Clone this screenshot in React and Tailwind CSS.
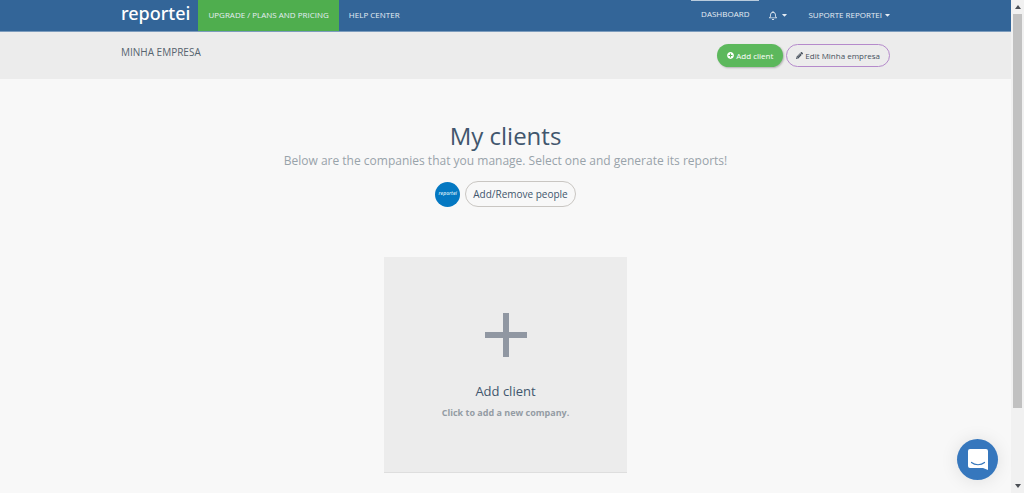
import { FaCaretDown, FaPlusCircle, FaPencilAlt, FaRegBell } from "react-icons/fa";

function TopBar() {
  return (
    <header className="bg-[#336598] border-b border-[#7c9cbd] text-[#e6edf4] text-[8px]">
      <nav className="mx-auto flex h-[31px] max-w-[769px] items-stretch pb-px">
        <a href="#home" className="flex items-center pb-1 pr-2 font-['Noto_Sans','Open_Sans',sans-serif] text-lg font-medium leading-none text-white">
          reportei
        </a>
        <a href="#plans" className="-mb-px flex items-center bg-[#4fae4e] px-[10px] pb-[2px]">
          UPGRADE / PLANS AND PRICING
        </a>
        <a href="#help" className="flex items-center px-[10px] pb-px">
          HELP CENTER
        </a>
        <div className="ml-auto flex items-stretch">
          <a href="#dashboard" className="flex items-center border-t border-[#b9cbdc] px-[10px] pb-[3px]">
            DASHBOARD
          </a>
          <button type="button" aria-label="Notifications" className="flex items-center gap-[5px] px-[10px]">
            <FaRegBell className="h-[9px] w-2" />
            <FaCaretDown className="h-2 w-[5px]" />
          </button>
          <button type="button" className="flex items-center gap-[3px] pl-[11px] pb-px">
            SUPORTE REPORTEI
            <FaCaretDown className="h-2 w-[5px]" />
          </button>
        </div>
      </nav>
    </header>
  );
}

function CompanyBar() {
  return (
    <section className="bg-[#ececec]">
      <div className="mx-auto flex h-[47px] max-w-[769px] items-center justify-between">
        <h2 className="pb-[6px] text-[10px] text-[#56646f]">MINHA EMPRESA</h2>
        <div className="flex gap-[3px] text-[8px]">
          <button type="button" className="flex h-[23px] items-center gap-[2px] rounded-full bg-[#5cb85c] px-[10px] text-white shadow-[1px_1px_2px_rgba(0,0,0,0.25)]">
            <FaPlusCircle className="size-[7px]" />
            Add client
          </button>
          <button type="button" className="flex h-[23px] items-center gap-[2px] rounded-full border border-[#b58acb] px-[9px] text-[#46505c]">
            <FaPencilAlt className="size-[7px]" />
            Edit Minha empresa
          </button>
        </div>
      </div>
    </section>
  );
}

function Clients() {
  return (
    <main className="flex flex-col items-center pt-10 text-center text-[#41566d]">
      <h1 className="text-2xl leading-[34px]">My clients</h1>
      <p className="text-xs leading-4 text-[#98a3aa]">
        Below are the companies that you manage. Select one and generate its reports!
      </p>
      <div className="mt-3 flex items-center gap-[5px]">
        <span className="flex size-[25px] items-center justify-center rounded-full bg-[#0478c2] text-[5px] italic font-semibold text-[#d5e9f6]">
          reportei
        </span>
        <button type="button" className="h-[26px] rounded-full border border-[#c9c6c2] px-[7px] text-[10px]">
          Add/Remove people
        </button>
      </div>
      <button type="button" className="mt-[50px] flex h-[216px] w-[243px] flex-col items-center border-b border-[#dedede] bg-[#ececec] pt-14">
        <svg viewBox="0 0 42 44" className="h-11 w-[42px]" fill="#9097a2" aria-hidden="true">
          <path d="M18 0h6v19h18v6H24v19h-6V25H0v-6h18z" />
        </svg>
        <span className="mt-6 text-[13px] leading-5">Add client</span>
        <span className="mt-1 text-[9px] font-bold leading-4 text-[#949ca4]">Click to add a new company.</span>
      </button>
    </main>
  );
}

function ScrollTrack() {
  return (
    <aside aria-hidden="true" className="sticky top-0 flex h-screen w-[13px] flex-col items-center bg-[#f1f1f1] py-[5px]">
      <svg viewBox="0 0 6 4" className="h-1 w-1.5" fill="#4b4f55"><path d="M0 4L3 0l3 4z" /></svg>
      <div className="mt-[5px] w-[9px] grow-[393] bg-[#c1c1c1]" />
      <div className="grow-[76]" />
      <svg viewBox="0 0 6 4" className="h-1 w-1.5" fill="#4b4f55"><path d="M0 0h6L3 4z" /></svg>
    </aside>
  );
}

export default function App() {
  return (
    <div className="flex min-h-screen bg-[#f8f8f8] font-['Open_Sans','Noto_Sans',sans-serif]">
      <div className="min-w-0 grow">
        <TopBar />
        <CompanyBar />
        <Clients />
      </div>
      <ScrollTrack />
      <button type="button" aria-label="Open chat" className="fixed bottom-[13px] right-[26px] flex size-[41px] items-center justify-center rounded-full bg-[#3677bd] shadow-[0_1px_18px_rgba(0,0,0,0.1)]">
        <svg viewBox="0 0 20 21" className="h-[21px] w-5" aria-hidden="true">
          <path d="M2 0h16a2 2 0 0 1 2 2v19l-5-2H2a2 2 0 0 1-2-2V2a2 2 0 0 1 2-2z" fill="#fff" />
          <path d="M3.5 13.5c3.5 3 9.5 3 13 0" fill="none" stroke="#3677bd" strokeWidth="1.2" strokeLinecap="round" />
        </svg>
      </button>
    </div>
  );
}
